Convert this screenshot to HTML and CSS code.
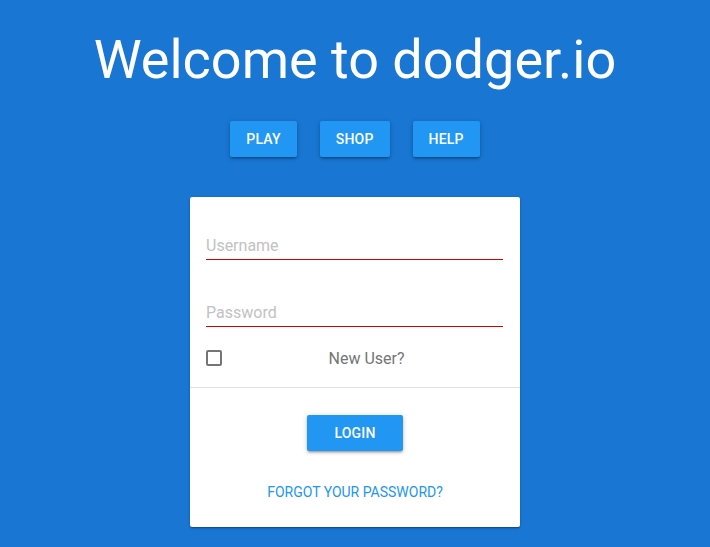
FILE: index.html
```html
<!DOCTYPE html>
<html lang="en">
<head>
<meta charset="utf-8">
<title>dodger.io</title>
<link rel="stylesheet" href="styles.css">
</head>
<body>
  <h1 class="title">Welcome to dodger.io</h1>
  <nav class="menu">
    <button class="btn">Play</button>
    <button class="btn">Shop</button>
    <button class="btn">Help</button>
  </nav>
  <div class="card">
    <div class="card-body">
      <input class="field field-user" type="text" placeholder="Username">
      <input class="field field-pass" type="password" placeholder="Password">
      <div class="check-row">
        <span class="checkbox"></span>
        <span class="check-label">New User?</span>
      </div>
    </div>
    <div class="divider"></div>
    <div class="card-actions">
      <button class="btn btn-login">Login</button>
      <a class="forgot" href="#">Forgot your password?</a>
    </div>
  </div>
</body>
</html>
```

FILE: styles.css
```css
* { box-sizing: border-box; }
html, body {
  margin: 0;
  padding: 0;
}
body {
  background: #1976d2;
  font-family: Roboto, "Liberation Sans", Arial, sans-serif;
  height: 547px;
  overflow: hidden;
}
.title {
  margin: 28px 0 0;
  font-size: 54px;
  line-height: 1.2;
  font-weight: 400;
  color: #fff;
  text-align: center;
  height: 65px;
}
.menu {
  margin-top: 28px;
  display: flex;
  justify-content: center;
  gap: 23px;
}
.btn {
  background: #2196f3;
  color: #fff;
  border: none;
  border-radius: 2px;
  font-family: inherit;
  font-size: 14px;
  font-weight: 500;
  text-transform: uppercase;
  height: 36px;
  padding: 0 16px;
  box-shadow: 0 1px 5px rgba(0,0,0,0.2), 0 2px 2px rgba(0,0,0,0.14), 0 3px 1px -2px rgba(0,0,0,0.12);
  letter-spacing: 0.2px;
}
.card {
  margin: 40px auto 0;
  width: 330px;
  height: 330px;
  background: #fff;
  border-radius: 2px;
  box-shadow: 0 1px 3px rgba(0,0,0,0.2), 0 1px 1px rgba(0,0,0,0.14), 0 2px 1px -1px rgba(0,0,0,0.12);
}
.card-body {
  padding: 39px 17px 0 16px;
}
.field {
  display: block;
  width: 100%;
  height: 24px;
  padding: 0 0 5px;
  border: none;
  border-bottom: 1px solid #d50000;
  font-family: inherit;
  font-size: 16px;
  color: #212121;
  outline: none;
  background: transparent;
}
.field::placeholder {
  color: #c2c2c2;
}
.field-pass {
  margin-top: 43px;
}
.check-row {
  margin-top: 19px;
  height: 24px;
  display: flex;
  align-items: center;
  margin-bottom: 17px;
}
.checkbox {
  width: 16px;
  height: 16px;
  border: 2px solid #757575;
  border-radius: 2px;
  flex: none;
}
.check-label {
  flex: 1;
  text-align: center;
  margin-left: 8px;
  font-size: 16px;
  color: #757575;
}
.divider {
  height: 1px;
  background: #e0e0e0;
}
.card-actions {
  display: flex;
  flex-direction: column;
  align-items: center;
  padding-top: 27px;
}
.btn-login {
  width: 96px;
}
.forgot {
  margin-top: 31px;
  line-height: 20px;
  font-size: 14px;
  color: #2196f3;
  text-decoration: none;
  text-transform: uppercase;
}
```
